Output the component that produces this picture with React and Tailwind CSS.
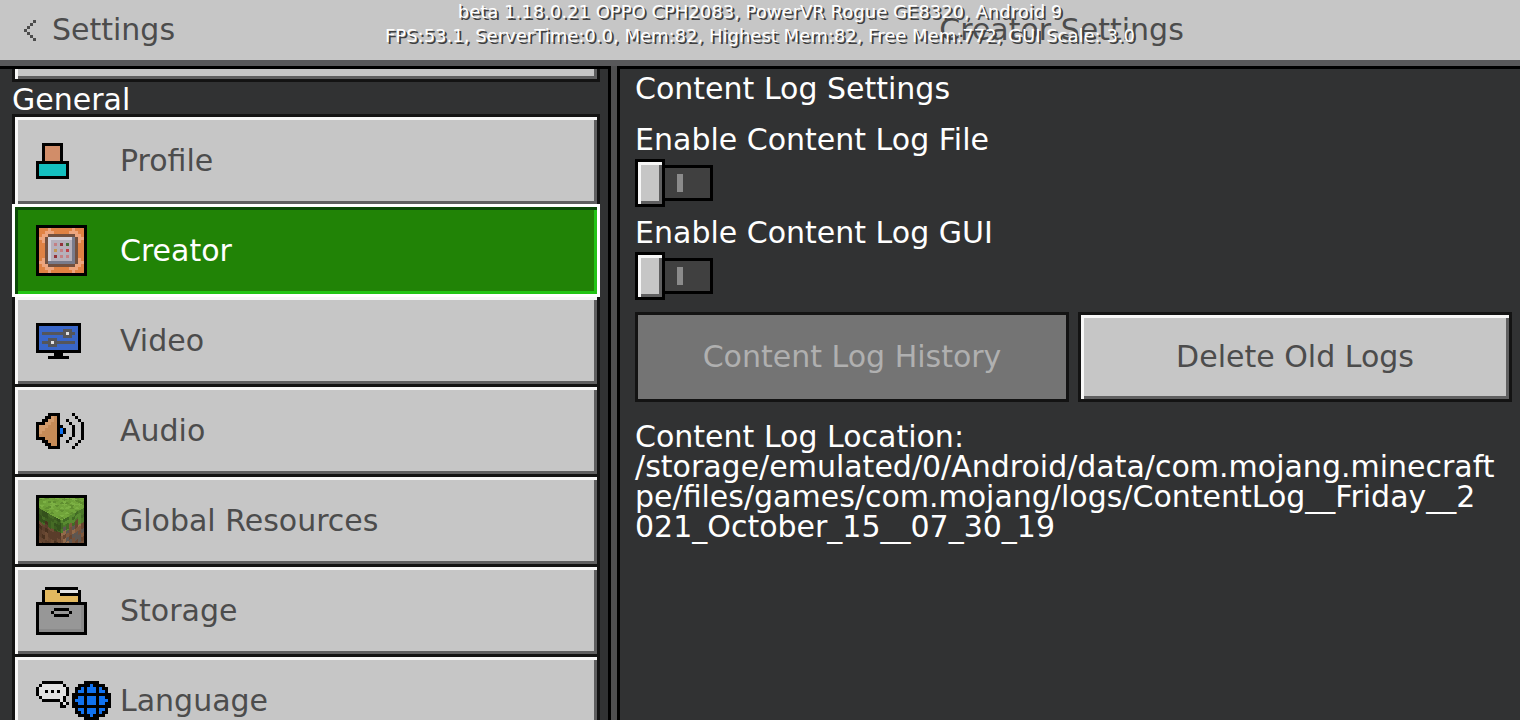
import { useState } from "react";
import clsx from "clsx";

const UNIT = 3;

const PALETTE = {
  K: "#000000",
  S: "#d18d69",
  T: "#14bfbf",
  B: "#3966c8",
  G: "#55565a",
  W: "#e2e2e2",
  U: "#1072f0",
  N: "#c68b57",
  n: "#d49c6c",
  O: "#e08244",
  L: "#eda57e",
  D: "#73503f",
  H: "#d3d0da",
  P: "#b6b0bb",
  M: "#797b8c",
  r: "#93323a",
  R: "#c04048",
  k: "#c47f84",
  g: "#44703a",
  y: "#c39750",
  Y: "#e2b85f",
  A: "#979797",
  a: "#8a8a8a",
};

// Each string is one row of art, each letter one square of the palette
const ART = {
  profile: [
    "..KKKKKKK..",
    "..KSSSSSK..",
    "..KSSSSSK..",
    "..KSSSSSK..",
    "..KSSSSSK..",
    "..KSSSSSK..",
    "KKKKKKKKKKK",
    "KTTTTTTTTTK",
    "KTTTTTTTTTK",
    "KTTTTTTTTTK",
    "KTTTTTTTTTK",
    "KKKKKKKKKKK",
  ],
  creator: [
    "KKKKKKKKKKKKKKKKK",
    "KOOOLOOOOOOOLOOOK",
    "KOOLLLOOOOOLLLOOK",
    "KOLLDDDDDDDDDLLOK",
    "KLLDHHHHHHHHMDLLK",
    "KOLDHPPPPPPPMDLOK",
    "KOODHPkPrPgPMDOOK",
    "KOODHPPPPPPPMDOOK",
    "KOODHPyPkPRPMDOOK",
    "KOODHPPPPPPPMDOOK",
    "KOODHPrPkPkPMDOOK",
    "KOLDHPPPPPPPMDLOK",
    "KLLDMMMMMMMMMDLLK",
    "KOLLDDDDDDDDDLLOK",
    "KOOLLLOOOOOLLLOOK",
    "KOOOLOOOOOOOLOOOK",
    "KKKKKKKKKKKKKKKKK",
  ],
  video: [
    "KKKKKKKKKKKKKKK",
    "KBBBBBBBBBBBBBK",
    "KBBBBBBBBGGGBBK",
    "KBGGGGGGGGWGGBK",
    "KBBBBBBBBGGGBBK",
    "KBBBGGGBBBBBBBK",
    "KBGGGWGGGGGGGBK",
    "KBBBGGGBBBBBBBK",
    "KBBBBBBBBBBBBBK",
    "KKKKKKKKKKKKKKK",
    "......KKK......",
    "....KKKKKKK....",
  ],
  audio: [
    "....KKKK....K...",
    "...KKnNK.....K..",
    "..KKnnNK..K...K.",
    "KKKnnNNK...K...K",
    "KnnnNNNKK...K..K",
    "KnnNNNNKUK..K..K",
    "KnNNNNNKUK..K..K",
    "KNNNNNNKK...K..K",
    "KKKNNNNK...K...K",
    "..KKNNNK..K...K.",
    "...KKNNK.....K..",
    "....KKKK....K...",
  ],
  storage: [
    "...KKKKKKKKKKK...",
    "..KYYYYKWWWWWWK..",
    "..KYYYYYKKKKKKK..",
    "..KYYYYYYYYYYYK..",
    "..KYYYYYYYYYYYK..",
    "KKKKKKKKKKKKKKKKK",
    "KAAAAAAAAAAAAAAaK",
    "KAAAAAKKKKKAAAAaK",
    "KAAAAKAAAAAKAAAaK",
    "KAAAAAKKKKKAAAAaK",
    "KAAAAAAAAAAAAAAaK",
    "KAAAAAAAAAAAAAAaK",
    "KAAAAAAAAAAAAAAaK",
    "KAAAAAAAAAAAAAAaK",
    "KaaaaaaaaaaaaaaaK",
    "KKKKKKKKKKKKKKKKK",
  ],
  language: [
    "..KKKKKKK.......KKKKK....",
    ".KWWWWWWWK....KKKKUKKKK..",
    "KWWWWWWWWWK..KKUKUUUKUKK.",
    "KWWKWKWKWWK..KUUKUUUKUUK.",
    "KWWWWWWWWWK.KKKKKKKKKKKKK",
    ".KWWWWWWWK..KKUUKUUUKUUKK",
    "..KKKKKKWK..KUUUKUUUKUUUK",
    "........KWK.KKUUKUUUKUUKK",
    "........KK..KKKKKKKKKKKKK",
    ".............KUUKUUUKUUK.",
    ".............KKUKUUUKUKK.",
    "..............KKKKUKKKK..",
    "................KKKKK....",
  ],
  back: ["...K", "..K.", ".K..", "K...", ".K..", "..K.", "...K"],
};

function PixelIcon({ name, fill }) {
  const rows = ART[name];
  const width = rows[0].length;
  return (
    <svg
      width={width * UNIT}
      height={rows.length * UNIT}
      viewBox={`0 0 ${width} ${rows.length}`}
      shapeRendering="crispEdges"
      aria-hidden="true"
      className="shrink-0"
    >
      {rows.map((row, y) =>
        [...row].map((cell, x) =>
          cell === "." ? null : (
            <rect key={`${x}-${y}`} x={x} y={y} width="1" height="1" fill={fill || PALETTE[cell]} />
          )
        )
      )}
    </svg>
  );
}

const GRASS_TOP = ["#6a9c35", "#72a53b", "#5f8e30", "#7cb144", "#6fa33a"];
const GRASS_LEFT = ["#3c5d20", "#456b25", "#34511c"];
const GRASS_RIGHT = ["#4c7a2a", "#588a30", "#426b25"];
const DIRT_LEFT = ["#5a3d2a", "#6d4b34", "#49311f", "#634430", "#5a3d2a"];
const DIRT_RIGHT = ["#80593d", "#684630", "#936a4a", "#75513a", "#5e5751"];

function noise(x, y) {
  const value = Math.sin(x * 12.9898 + y * 78.233) * 43758.5453;
  return Math.floor((value - Math.floor(value)) * 100);
}

function blockColor(x, y) {
  const left = x < 22;
  const edge = left ? 10 + x * 0.55 : 22 - (x - 22) * 0.57;
  // The side faces are sheared, so their texture follows the edge
  const depth = Math.floor(y - edge);
  if (depth < 0) {
    const u = Math.floor((x + y * 2) / 5);
    const v = Math.floor((y * 2 - x + 60) / 5);
    return GRASS_TOP[noise(u, v) % 5];
  }
  const column = Math.floor(x / 3);
  if (depth < 8 + (noise(column, 3) % 7)) {
    return (left ? GRASS_LEFT : GRASS_RIGHT)[noise(column, Math.floor(depth / 3)) % 3];
  }
  return (left ? DIRT_LEFT : DIRT_RIGHT)[noise(column, Math.floor(depth / 4) + 20) % 5];
}

function GrassBlock() {
  const cells = [];
  for (let y = 0; y < 45; y++) {
    for (let x = 0; x < 45; x++) {
      cells.push(<rect key={`${x}-${y}`} x={x + 3} y={y + 3} width="1" height="1" fill={blockColor(x, y)} />);
    }
  }
  return (
    <svg width="51" height="51" viewBox="0 0 51 51" shapeRendering="crispEdges" aria-hidden="true" className="shrink-0">
      <rect width="51" height="51" fill="#000000" />
      {cells}
    </svg>
  );
}

const items = [
  { id: "profile", label: "Profile" },
  { id: "creator", label: "Creator" },
  { id: "video", label: "Video" },
  { id: "audio", label: "Audio" },
  { id: "resources", label: "Global Resources" },
  { id: "storage", label: "Storage" },
  { id: "language", label: "Language" },
];

const RAISED = "bg-[#c6c6c6] shadow-[inset_3px_3px_#f7f7f7,inset_-3px_-3px_#5f5f60]";

function MenuItem({ item, selected, onSelect }) {
  return (
    <button
      type="button"
      onClick={onSelect}
      className={clsx(
        "-mt-[3px] flex h-[93px] w-full shrink-0 items-center border-3 pl-[21px] text-left",
        selected
          ? "relative z-10 border-white bg-[#218306] text-white shadow-[inset_3px_3px_#0b4a07,inset_-3px_-3px_#22c414]"
          : ["border-[#131313] text-[#4c4c4c]", RAISED]
      )}
    >
      {item && (
        <>
          <span className="flex w-[84px] shrink-0 items-center">
            {item.id === "resources" ? <GrassBlock /> : <PixelIcon name={item.id} />}
          </span>
          {item.label}
        </>
      )}
    </button>
  );
}

function Toggle({ label }) {
  return (
    <label className="flex w-fit cursor-pointer flex-col gap-1">
      {label}
      <input type="checkbox" role="switch" className="peer sr-only" />
      <span className="flex items-center peer-checked:flex-row-reverse peer-checked:justify-end">
        <span className={clsx("relative z-10 h-12 w-[30px] border-3 border-black", RAISED)} />
        <span className="-mx-[3px] flex h-9 w-[51px] items-center border-3 border-black bg-[#404040] pl-3">
          <span className="h-[18px] w-[6px] bg-[#8b8b8b]" />
        </span>
      </span>
    </label>
  );
}

export default function App() {
  const [current, setCurrent] = useState("creator");

  return (
    <div className="relative flex h-screen flex-col overflow-hidden bg-[#4f4f50] font-['DejaVu_Sans',sans-serif] text-[30px] leading-[30px] text-white">
      <header className="flex h-[60px] shrink-0 items-center bg-[#c6c6c6] text-[#4c4c4c]">
        <div className="w-[40.2%] pl-6">
          <button type="button" className="flex items-center gap-4">
            <PixelIcon name="back" fill="#4c4c4c" />
            Settings
          </button>
        </div>
        <h1 className="flex-1 pr-2 text-center">Creator Settings</h1>
      </header>

      <div className="pointer-events-none absolute inset-x-0 top-0 z-20 text-center text-[18px] leading-6 whitespace-nowrap text-white [text-shadow:2px_2px_#404040]">
        <p>beta 1.18.0.21 OPPO CPH2083, PowerVR Rogue GE8320, Android 9</p>
        <p>FPS:53.1, ServerTime:0.0, Mem:82, Highest Mem:82, Free Mem:772, GUI Scale: 3.0</p>
      </div>

      <main className="flex min-h-0 flex-1 gap-[6px] border-t-[6px] border-[#58585a]">
        <nav className="flex w-[40.2%] shrink-0 flex-col overflow-hidden border-t-3 border-r-3 border-black bg-[#313233] pr-2 pl-3">
          <div className="flex h-[13px] shrink-0 items-end overflow-hidden" aria-hidden="true">
            <MenuItem />
          </div>
          <h2 className="mb-[3px] h-8 shrink-0 leading-9">General</h2>
          {items.map((item) => (
            <MenuItem
              key={item.id}
              item={item}
              selected={item.id === current}
              onSelect={() => setCurrent(item.id)}
            />
          ))}
        </nav>

        <section className="min-w-0 flex-1 overflow-hidden border-t-3 border-l-3 border-black bg-[#313233] pt-[5px] pr-2 pl-[15px]">
          <h2 className="mb-[21px]">Content Log Settings</h2>
          <div className="mb-3 flex flex-col gap-[11px]">
            <Toggle label="Enable Content Log File" />
            <Toggle label="Enable Content Log GUI" />
          </div>
          <div className="mb-5 grid grid-cols-2 gap-[9px]">
            <button
              type="button"
              disabled
              className="h-[90px] border-3 border-[#131313] bg-[#747474] text-[#b0b0b0]"
            >
              Content Log History
            </button>
            <button type="button" className={clsx("h-[90px] border-3 border-[#131313] text-[#4c4c4c]", RAISED)}>
              Delete Old Logs
            </button>
          </div>
          <p className="whitespace-nowrap">
            Content Log Location:
            <br />
            /storage/emulated/0/Android/data/com.mojang.minecraft
            <br />
            pe/files/games/com.mojang/logs/ContentLog__Friday__2
            <br />
            021_October_15__07_30_19
          </p>
        </section>
      </main>
    </div>
  );
}
